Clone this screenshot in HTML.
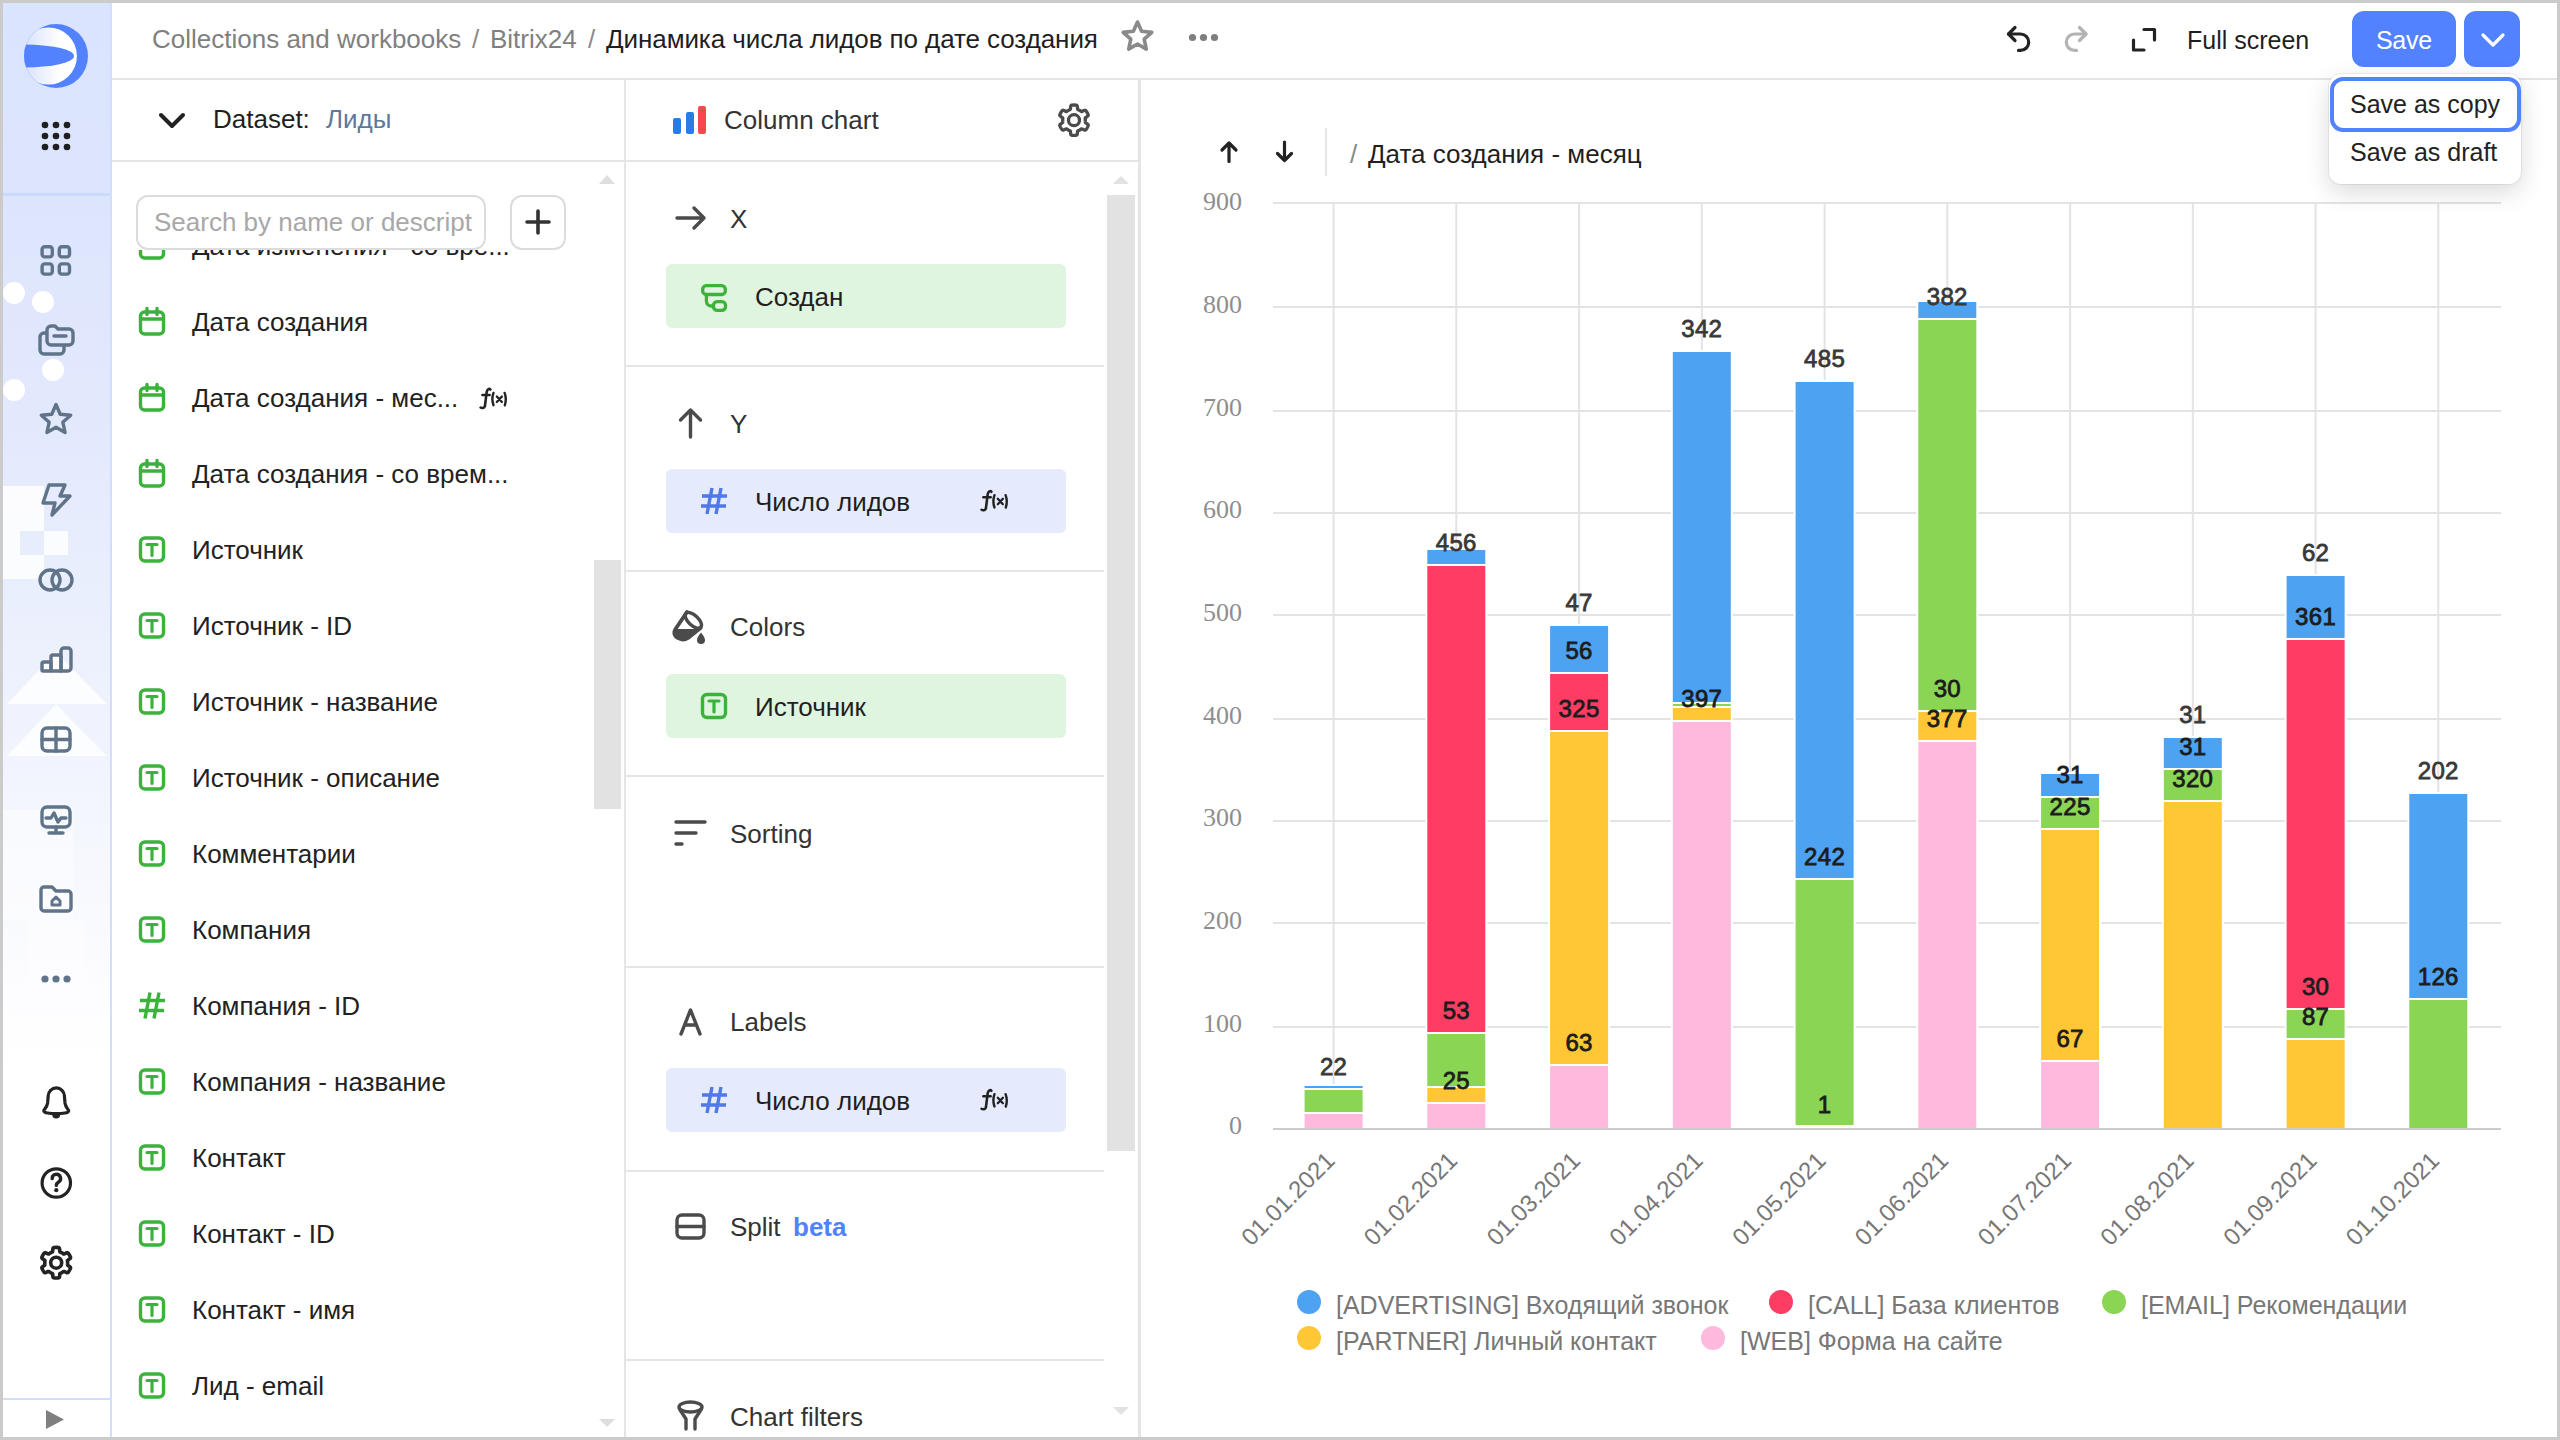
<!DOCTYPE html>
<html><head><meta charset="utf-8">
<style>
*{box-sizing:border-box}
html,body{margin:0;padding:0}
body{width:2560px;height:1440px;position:relative;overflow:hidden;background:#fff;font-family:"Liberation Sans",sans-serif;color:#222}
.a{position:absolute}
.t{position:absolute;white-space:nowrap;font-size:26px;line-height:26px}
.bd{position:absolute;background:#e5e5e5}
#ov{position:absolute;left:0;top:0;width:2560px;height:1440px;overflow:visible;z-index:5}
</style></head><body>

<div class="a" style="left:0;top:0;width:111px;height:1440px;background:linear-gradient(180deg,#dbe4fe 0px,#dde5fd 200px,#e3e9fd 420px,#eaeffd 600px,#f2f5fe 780px,#f9fafe 920px,#fdfdff 1000px,#fff 1060px)"></div>
<svg class="a" style="left:0;top:0;z-index:1" width="111" height="1440"><g fill="#fff"><circle cx="14" cy="293" r="11"/><circle cx="43" cy="302" r="11"/><circle cx="53" cy="370" r="11"/><circle cx="14" cy="390" r="11"/></g><g fill="#fff" opacity="0.85"><path d="M3 486H44V579H3Z M20 531V555H44V531Z" fill-rule="evenodd"/><rect x="44" y="531" width="24" height="24"/><path d="M7 704 L56 652 L107 704 Z"/><path d="M7 756 L56 704 L107 756 Z" opacity="0.95"/></g><g fill="#fff" opacity="0.45"><rect x="3" y="810" width="70" height="110"/><rect x="28" y="920" width="57" height="80"/></g></svg>
<div class="bd" style="left:110px;top:0;width:2px;height:1440px;background:#d4ddfb;z-index:2"></div>
<div class="bd" style="left:0;top:193px;width:110px;height:3px;background:#cbd9fb;z-index:2"></div>
<div class="bd" style="left:0;top:1398px;width:110px;height:2px;background:#d4ddfb;z-index:2"></div>
<div class="bd" style="left:112px;top:78px;width:2448px;height:2px"></div>
<div class="t" style="left:152px;top:26px;color:#7f7f7f">Collections and workbooks</div>
<div class="t" style="left:472px;top:26px;color:#8a8a8a">/</div>
<div class="t" style="left:490px;top:26px;color:#7f7f7f">Bitrix24</div>
<div class="t" style="left:588px;top:26px;color:#8a8a8a">/</div>
<div class="t" style="left:606px;top:26px;color:#1f1f1f;letter-spacing:-0.08px">Динамика числа лидов по дате создания</div>
<div class="t" style="left:2187px;top:27px;font-size:25px;color:#1f1f1f">Full screen</div>
<div class="a" style="left:2352px;top:11px;width:104px;height:56px;border-radius:12px;background:#5282ff"></div>
<div class="t" style="left:2376px;top:27px;color:#fff;font-size:25px;letter-spacing:-0.3px">Save</div>
<div class="a" style="left:2464px;top:11px;width:56px;height:56px;border-radius:12px;background:#5282ff"></div>
<div class="a" style="left:2329px;top:74px;width:192px;height:110px;border-radius:12px;background:#fff;box-shadow:0 8px 24px rgba(0,0,0,0.15),0 0 0 1px rgba(0,0,0,0.06);z-index:8"></div>
<div class="a" style="left:2330px;top:77px;width:191px;height:55px;border-radius:13px;border:4px solid #5282ff;z-index:9"></div>
<div class="t" style="left:2350px;top:91px;font-size:25px;color:#222;z-index:9">Save as copy</div>
<div class="t" style="left:2350px;top:139px;font-size:25px;color:#222;z-index:9">Save as draft</div>
<div class="bd" style="left:112px;top:160px;width:513px;height:2px;z-index:3"></div>
<div class="bd" style="left:624px;top:80px;width:2px;height:1360px"></div>
<div class="a" style="left:112px;top:80px;width:512px;height:80px;background:#fff;z-index:2"></div>
<div class="t" style="left:213px;top:106px;color:#1f1f1f;z-index:3">Dataset:</div>
<div class="t" style="left:326px;top:106px;color:#5b7a9b;z-index:3">Лиды</div>
<div class="t" style="left:192px;top:233px;color:#222">Дата изменения - со вре...</div>
<div class="t" style="left:192px;top:309px;color:#222">Дата создания</div>
<div class="t" style="left:192px;top:385px;color:#222">Дата создания - мес...</div>
<div class="t" style="left:192px;top:461px;color:#222">Дата создания - со врем...</div>
<div class="t" style="left:192px;top:537px;color:#222">Источник</div>
<div class="t" style="left:192px;top:613px;color:#222">Источник - ID</div>
<div class="t" style="left:192px;top:689px;color:#222">Источник - название</div>
<div class="t" style="left:192px;top:765px;color:#222">Источник - описание</div>
<div class="t" style="left:192px;top:841px;color:#222">Комментарии</div>
<div class="t" style="left:192px;top:917px;color:#222">Компания</div>
<div class="t" style="left:192px;top:993px;color:#222">Компания - ID</div>
<div class="t" style="left:192px;top:1069px;color:#222">Компания - название</div>
<div class="t" style="left:192px;top:1145px;color:#222">Контакт</div>
<div class="t" style="left:192px;top:1221px;color:#222">Контакт - ID</div>
<div class="t" style="left:192px;top:1297px;color:#222">Контакт - имя</div>
<div class="t" style="left:192px;top:1373px;color:#222">Лид - email</div>
<div class="a" style="left:112px;top:162px;width:480px;height:88px;background:#fff;z-index:6"></div>
<div class="a" style="left:136px;top:195px;width:350px;height:55px;border-radius:12px;border:2px solid #dcdcdc;background:#fff;z-index:7"></div>
<div class="t" style="left:154px;top:209px;color:#a8a8a8;z-index:7">Search by name or descript</div>
<div class="a" style="left:510px;top:195px;width:56px;height:55px;border-radius:12px;border:2px solid #dcdcdc;background:#fff;z-index:7"></div>
<svg class="a" style="left:510px;top:195px;z-index:8" width="56" height="55"><g stroke="#333" stroke-width="3.6" stroke-linecap="round"><path d="M28 16V38M17 27H39"/></g></svg>
<div class="a" style="left:594px;top:560px;width:27px;height:249px;background:#e2e2e2"></div>
<div class="bd" style="left:626px;top:160px;width:512px;height:2px"></div>
<div class="bd" style="left:1138px;top:80px;width:3px;height:1360px"></div>
<div class="t" style="left:724px;top:107px;color:#333">Column chart</div>
<div class="a" style="left:1107px;top:195px;width:28px;height:956px;background:#e2e2e2"></div>
<div class="bd" style="left:626px;top:365px;width:478px;height:2px"></div>
<div class="bd" style="left:626px;top:570px;width:478px;height:2px"></div>
<div class="bd" style="left:626px;top:775px;width:478px;height:2px"></div>
<div class="bd" style="left:626px;top:966px;width:478px;height:2px"></div>
<div class="bd" style="left:626px;top:1170px;width:478px;height:2px"></div>
<div class="bd" style="left:626px;top:1359px;width:478px;height:2px"></div>
<div class="t" style="left:730px;top:205.5px;color:#333">X</div>
<div class="t" style="left:730px;top:410.5px;color:#333">Y</div>
<div class="t" style="left:730px;top:614px;color:#333">Colors</div>
<div class="t" style="left:730px;top:820.5px;color:#333">Sorting</div>
<div class="t" style="left:730px;top:1009px;color:#333">Labels</div>
<div class="t" style="left:730px;top:1214px;color:#333">Split</div>
<div class="t" style="left:730px;top:1404px;color:#333">Chart filters</div>
<div class="t" style="left:793px;top:1214px;color:#5282ff;font-weight:bold">beta</div>
<div class="a" style="left:666px;top:264px;width:400px;height:64px;border-radius:6px;background:#e0f5e0"></div>
<div class="t" style="left:755px;top:284px;color:#1f1f1f">Создан</div>
<div class="a" style="left:666px;top:469px;width:400px;height:64px;border-radius:6px;background:#e5ebfd"></div>
<div class="t" style="left:755px;top:489px;color:#1f1f1f">Число лидов</div>
<div class="a" style="left:666px;top:674px;width:400px;height:64px;border-radius:6px;background:#e0f5e0"></div>
<div class="t" style="left:755px;top:694px;color:#1f1f1f">Источник</div>
<div class="a" style="left:666px;top:1068px;width:400px;height:64px;border-radius:6px;background:#e5ebfd"></div>
<div class="t" style="left:755px;top:1088px;color:#1f1f1f">Число лидов</div>
<div class="bd" style="left:1325px;top:128px;width:2px;height:48px"></div>
<div class="t" style="left:1350px;top:141px;color:#888">/</div>
<div class="t" style="left:1368px;top:141px;color:#1f1f1f">Дата создания - месяц</div>
<svg class="a" style="left:0;top:0;z-index:1" width="2560" height="1440">
<g transform="translate(152,245.5)" fill="none" stroke="#3bb33b" stroke-width="3.4" stroke-linecap="round"><rect x="-11.5" y="-9.5" width="23" height="22" rx="4"/><path d="M-11.5 -2.5H11.5M-5 -13V-7M5 -13V-7"/></g>
<g transform="translate(152,321.5)" fill="none" stroke="#3bb33b" stroke-width="3.4" stroke-linecap="round"><rect x="-11.5" y="-9.5" width="23" height="22" rx="4"/><path d="M-11.5 -2.5H11.5M-5 -13V-7M5 -13V-7"/></g>
<g transform="translate(152,397.5)" fill="none" stroke="#3bb33b" stroke-width="3.4" stroke-linecap="round"><rect x="-11.5" y="-9.5" width="23" height="22" rx="4"/><path d="M-11.5 -2.5H11.5M-5 -13V-7M5 -13V-7"/></g>
<g fill="none" stroke="#222" stroke-linecap="round"><path d="M480.60 407.50 C481.80 408.35 484.00 408.35 484.90 406.25 L486.70 391.95 C487.20 388.95 489.40 388.25 490.40 389.55" stroke-width="2.6"/><path d="M482.40 395.00 H489.60" stroke-width="2.6"/><path d="M493.50 392.95 Q491.20 399.10 493.50 405.25 M504.60 392.95 Q506.90 399.10 504.80 405.25" stroke-width="2.4"/><path d="M496.80 396.55 L501.90 401.95 M501.90 396.55 L496.80 401.95" stroke-width="2.3"/></g>
<g transform="translate(152,473.5)" fill="none" stroke="#3bb33b" stroke-width="3.4" stroke-linecap="round"><rect x="-11.5" y="-9.5" width="23" height="22" rx="4"/><path d="M-11.5 -2.5H11.5M-5 -13V-7M5 -13V-7"/></g>
<g transform="translate(152,549.5)" fill="none" stroke="#3bb33b" stroke-width="3.4" stroke-linecap="round"><rect x="-11.5" y="-11.5" width="23" height="23" rx="4.5"/><path d="M-5 -5H5M0 -5V6" stroke-width="3.2"/></g>
<g transform="translate(152,625.5)" fill="none" stroke="#3bb33b" stroke-width="3.4" stroke-linecap="round"><rect x="-11.5" y="-11.5" width="23" height="23" rx="4.5"/><path d="M-5 -5H5M0 -5V6" stroke-width="3.2"/></g>
<g transform="translate(152,701.5)" fill="none" stroke="#3bb33b" stroke-width="3.4" stroke-linecap="round"><rect x="-11.5" y="-11.5" width="23" height="23" rx="4.5"/><path d="M-5 -5H5M0 -5V6" stroke-width="3.2"/></g>
<g transform="translate(152,777.5)" fill="none" stroke="#3bb33b" stroke-width="3.4" stroke-linecap="round"><rect x="-11.5" y="-11.5" width="23" height="23" rx="4.5"/><path d="M-5 -5H5M0 -5V6" stroke-width="3.2"/></g>
<g transform="translate(152,853.5)" fill="none" stroke="#3bb33b" stroke-width="3.4" stroke-linecap="round"><rect x="-11.5" y="-11.5" width="23" height="23" rx="4.5"/><path d="M-5 -5H5M0 -5V6" stroke-width="3.2"/></g>
<g transform="translate(152,929.5)" fill="none" stroke="#3bb33b" stroke-width="3.4" stroke-linecap="round"><rect x="-11.5" y="-11.5" width="23" height="23" rx="4.5"/><path d="M-5 -5H5M0 -5V6" stroke-width="3.2"/></g>
<g transform="translate(152,1005.5)" fill="none" stroke="#3bb33b" stroke-width="3.4" stroke-linecap="butt"><path d="M-2 -13L-7 13M7 -13L2 13M-12 -5H13M-13 5H12"/></g>
<g transform="translate(152,1081.5)" fill="none" stroke="#3bb33b" stroke-width="3.4" stroke-linecap="round"><rect x="-11.5" y="-11.5" width="23" height="23" rx="4.5"/><path d="M-5 -5H5M0 -5V6" stroke-width="3.2"/></g>
<g transform="translate(152,1157.5)" fill="none" stroke="#3bb33b" stroke-width="3.4" stroke-linecap="round"><rect x="-11.5" y="-11.5" width="23" height="23" rx="4.5"/><path d="M-5 -5H5M0 -5V6" stroke-width="3.2"/></g>
<g transform="translate(152,1233.5)" fill="none" stroke="#3bb33b" stroke-width="3.4" stroke-linecap="round"><rect x="-11.5" y="-11.5" width="23" height="23" rx="4.5"/><path d="M-5 -5H5M0 -5V6" stroke-width="3.2"/></g>
<g transform="translate(152,1309.5)" fill="none" stroke="#3bb33b" stroke-width="3.4" stroke-linecap="round"><rect x="-11.5" y="-11.5" width="23" height="23" rx="4.5"/><path d="M-5 -5H5M0 -5V6" stroke-width="3.2"/></g>
<g transform="translate(152,1385.5)" fill="none" stroke="#3bb33b" stroke-width="3.4" stroke-linecap="round"><rect x="-11.5" y="-11.5" width="23" height="23" rx="4.5"/><path d="M-5 -5H5M0 -5V6" stroke-width="3.2"/></g>
<g transform="translate(714,296)" fill="none" stroke="#3bb33b" stroke-width="3.3" stroke-linecap="round" stroke-linejoin="round"><rect x="-11.3" y="-10.3" width="22.6" height="8.8" rx="3.6"/><rect x="-0.5" y="5.6" width="12" height="8.8" rx="3.6"/><path d="M-7.6 -1.5V5A5 5 0 0 0 -2.6 10H-0.5"/></g>
<g transform="translate(714,501)" fill="none" stroke="#4f78e8" stroke-width="3.4"><path d="M-2 -13L-7 13M7 -13L2 13M-12 -5H13M-13 5H12"/></g>
<g fill="none" stroke="#222" stroke-linecap="round"><path d="M981.60 509.75 C982.80 510.60 985.00 510.60 985.90 508.50 L987.70 494.20 C988.20 491.20 990.40 490.50 991.40 491.80" stroke-width="2.6"/><path d="M983.40 497.25 H990.60" stroke-width="2.6"/><path d="M994.50 495.20 Q992.20 501.35 994.50 507.50 M1005.60 495.20 Q1007.90 501.35 1005.80 507.50" stroke-width="2.4"/><path d="M997.80 498.80 L1002.90 504.20 M1002.90 498.80 L997.80 504.20" stroke-width="2.3"/></g>
<g transform="translate(714,706)" fill="none" stroke="#3bb33b" stroke-width="3.4" stroke-linecap="round"><rect x="-11.5" y="-11.5" width="23" height="23" rx="4.5"/><path d="M-5 -5H5M0 -5V6" stroke-width="3.2"/></g>
<g transform="translate(714,1100)" fill="none" stroke="#4f78e8" stroke-width="3.4"><path d="M-2 -13L-7 13M7 -13L2 13M-12 -5H13M-13 5H12"/></g>
<g fill="none" stroke="#222" stroke-linecap="round"><path d="M981.60 1108.75 C982.80 1109.60 985.00 1109.60 985.90 1107.50 L987.70 1093.20 C988.20 1090.20 990.40 1089.50 991.40 1090.80" stroke-width="2.6"/><path d="M983.40 1096.25 H990.60" stroke-width="2.6"/><path d="M994.50 1094.20 Q992.20 1100.35 994.50 1106.50 M1005.60 1094.20 Q1007.90 1100.35 1005.80 1106.50" stroke-width="2.4"/><path d="M997.80 1097.80 L1002.90 1103.20 M1002.90 1097.80 L997.80 1103.20" stroke-width="2.3"/></g>
</svg>
<svg id="ov" width="2560" height="1440">
<rect x="1273" y="1026" width="1228" height="2" fill="#e3e3e3"/>
<rect x="1273" y="922" width="1228" height="2" fill="#e3e3e3"/>
<rect x="1273" y="820" width="1228" height="2" fill="#e3e3e3"/>
<rect x="1273" y="718" width="1228" height="2" fill="#e3e3e3"/>
<rect x="1273" y="614" width="1228" height="2" fill="#e3e3e3"/>
<rect x="1273" y="512" width="1228" height="2" fill="#e3e3e3"/>
<rect x="1273" y="410" width="1228" height="2" fill="#e3e3e3"/>
<rect x="1273" y="306" width="1228" height="2" fill="#e3e3e3"/>
<rect x="1273" y="202" width="1228" height="2" fill="#e3e3e3"/>
<text x="1242" y="1134.3" text-anchor="end" font-family="Liberation Serif" font-size="26" fill="#8e8e8e">0</text>
<text x="1242" y="1031.6" text-anchor="end" font-family="Liberation Serif" font-size="26" fill="#8e8e8e">100</text>
<text x="1242" y="929.0" text-anchor="end" font-family="Liberation Serif" font-size="26" fill="#8e8e8e">200</text>
<text x="1242" y="826.3" text-anchor="end" font-family="Liberation Serif" font-size="26" fill="#8e8e8e">300</text>
<text x="1242" y="723.6" text-anchor="end" font-family="Liberation Serif" font-size="26" fill="#8e8e8e">400</text>
<text x="1242" y="621.0" text-anchor="end" font-family="Liberation Serif" font-size="26" fill="#8e8e8e">500</text>
<text x="1242" y="518.3" text-anchor="end" font-family="Liberation Serif" font-size="26" fill="#8e8e8e">600</text>
<text x="1242" y="415.6" text-anchor="end" font-family="Liberation Serif" font-size="26" fill="#8e8e8e">700</text>
<text x="1242" y="313.0" text-anchor="end" font-family="Liberation Serif" font-size="26" fill="#8e8e8e">800</text>
<text x="1242" y="210.3" text-anchor="end" font-family="Liberation Serif" font-size="26" fill="#8e8e8e">900</text>
<rect x="1332.6" y="202" width="2" height="927" fill="#e3e3e3"/>
<rect x="1455.3" y="202" width="2" height="927" fill="#e3e3e3"/>
<rect x="1578.1" y="202" width="2" height="927" fill="#e3e3e3"/>
<rect x="1700.8" y="202" width="2" height="927" fill="#e3e3e3"/>
<rect x="1823.6" y="202" width="2" height="927" fill="#e3e3e3"/>
<rect x="1946.3" y="202" width="2" height="927" fill="#e3e3e3"/>
<rect x="2069.1" y="202" width="2" height="927" fill="#e3e3e3"/>
<rect x="2191.8" y="202" width="2" height="927" fill="#e3e3e3"/>
<rect x="2314.6" y="202" width="2" height="927" fill="#e3e3e3"/>
<rect x="2437.3" y="202" width="2" height="927" fill="#e3e3e3"/>
<rect x="1273" y="1128" width="1228" height="2" fill="#cccccc"/>
<rect x="1302.6" y="1084" width="62" height="44" fill="#fff"/>
<rect x="1304.6" y="1086" width="58" height="2" fill="#4da2f1"/>
<rect x="1304.6" y="1090" width="58" height="22" fill="#8ad554"/>
<rect x="1304.6" y="1114" width="58" height="14" fill="#ffb9dd"/>
<rect x="1425.3" y="548" width="62" height="580" fill="#fff"/>
<rect x="1427.3" y="550" width="58" height="14" fill="#4da2f1"/>
<rect x="1427.3" y="566" width="58" height="466" fill="#ff3d64"/>
<rect x="1427.3" y="1034" width="58" height="52" fill="#8ad554"/>
<rect x="1427.3" y="1088" width="58" height="14" fill="#ffc636"/>
<rect x="1427.3" y="1104" width="58" height="24" fill="#ffb9dd"/>
<rect x="1548.1" y="624" width="62" height="504" fill="#fff"/>
<rect x="1550.1" y="626" width="58" height="46" fill="#4da2f1"/>
<rect x="1550.1" y="674" width="58" height="56" fill="#ff3d64"/>
<rect x="1550.1" y="732" width="58" height="332" fill="#ffc636"/>
<rect x="1550.1" y="1066" width="58" height="62" fill="#ffb9dd"/>
<rect x="1670.8" y="350" width="62" height="778" fill="#fff"/>
<rect x="1672.8" y="352" width="58" height="350" fill="#4da2f1"/>
<rect x="1672.8" y="704" width="58" height="2" fill="#8ad554"/>
<rect x="1672.8" y="708" width="58" height="12" fill="#ffc636"/>
<rect x="1672.8" y="722" width="58" height="406" fill="#ffb9dd"/>
<rect x="1793.6" y="380" width="62" height="748" fill="#fff"/>
<rect x="1795.6" y="382" width="58" height="496" fill="#4da2f1"/>
<rect x="1795.6" y="880" width="58" height="245" fill="#8ad554"/>
<rect x="1916.3" y="300" width="62" height="828" fill="#fff"/>
<rect x="1918.3" y="302" width="58" height="16" fill="#4da2f1"/>
<rect x="1918.3" y="320" width="58" height="390" fill="#8ad554"/>
<rect x="1918.3" y="712" width="58" height="28" fill="#ffc636"/>
<rect x="1918.3" y="742" width="58" height="386" fill="#ffb9dd"/>
<rect x="2039.1" y="772" width="62" height="356" fill="#fff"/>
<rect x="2041.1" y="774" width="58" height="22" fill="#4da2f1"/>
<rect x="2041.1" y="798" width="58" height="30" fill="#8ad554"/>
<rect x="2041.1" y="830" width="58" height="230" fill="#ffc636"/>
<rect x="2041.1" y="1062" width="58" height="66" fill="#ffb9dd"/>
<rect x="2161.8" y="736" width="62" height="392" fill="#fff"/>
<rect x="2163.8" y="738" width="58" height="30" fill="#4da2f1"/>
<rect x="2163.8" y="770" width="58" height="30" fill="#8ad554"/>
<rect x="2163.8" y="802" width="58" height="326" fill="#ffc636"/>
<rect x="2284.6" y="574" width="62" height="554" fill="#fff"/>
<rect x="2286.6" y="576" width="58" height="62" fill="#4da2f1"/>
<rect x="2286.6" y="640" width="58" height="368" fill="#ff3d64"/>
<rect x="2286.6" y="1010" width="58" height="28" fill="#8ad554"/>
<rect x="2286.6" y="1040" width="58" height="88" fill="#ffc636"/>
<rect x="2407.3" y="792" width="62" height="336" fill="#fff"/>
<rect x="2409.3" y="794" width="58" height="204" fill="#4da2f1"/>
<rect x="2409.3" y="1000" width="58" height="128" fill="#8ad554"/>
<text x="1333.6" y="1074.5" text-anchor="middle" font-family="Liberation Sans" font-size="24" fill="#383838" stroke="#383838" stroke-width="0.8" letter-spacing="0.3">22</text>
<text x="1456.3" y="550.5" text-anchor="middle" font-family="Liberation Sans" font-size="24" fill="#383838" stroke="#383838" stroke-width="0.8" letter-spacing="0.3">456</text>
<text x="1456.3" y="1018.5" text-anchor="middle" font-family="Liberation Sans" font-size="24" fill="#1c1c1c" stroke="#1c1c1c" stroke-width="0.8" letter-spacing="0.3">53</text>
<text x="1456.3" y="1088.5" text-anchor="middle" font-family="Liberation Sans" font-size="24" fill="#1c1c1c" stroke="#1c1c1c" stroke-width="0.8" letter-spacing="0.3">25</text>
<text x="1579.1" y="610.5" text-anchor="middle" font-family="Liberation Sans" font-size="24" fill="#383838" stroke="#383838" stroke-width="0.8" letter-spacing="0.3">47</text>
<text x="1579.1" y="658.5" text-anchor="middle" font-family="Liberation Sans" font-size="24" fill="#1c1c1c" stroke="#1c1c1c" stroke-width="0.8" letter-spacing="0.3">56</text>
<text x="1579.1" y="716.5" text-anchor="middle" font-family="Liberation Sans" font-size="24" fill="#1c1c1c" stroke="#1c1c1c" stroke-width="0.8" letter-spacing="0.3">325</text>
<text x="1579.1" y="1050.5" text-anchor="middle" font-family="Liberation Sans" font-size="24" fill="#1c1c1c" stroke="#1c1c1c" stroke-width="0.8" letter-spacing="0.3">63</text>
<text x="1701.8" y="336.5" text-anchor="middle" font-family="Liberation Sans" font-size="24" fill="#383838" stroke="#383838" stroke-width="0.8" letter-spacing="0.3">342</text>
<text x="1701.8" y="706.5" text-anchor="middle" font-family="Liberation Sans" font-size="24" fill="#1c1c1c" stroke="#1c1c1c" stroke-width="0.8" letter-spacing="0.3">397</text>
<text x="1824.6" y="366.5" text-anchor="middle" font-family="Liberation Sans" font-size="24" fill="#383838" stroke="#383838" stroke-width="0.8" letter-spacing="0.3">485</text>
<text x="1824.6" y="864.5" text-anchor="middle" font-family="Liberation Sans" font-size="24" fill="#1c1c1c" stroke="#1c1c1c" stroke-width="0.8" letter-spacing="0.3">242</text>
<text x="1824.6" y="1112.5" text-anchor="middle" font-family="Liberation Sans" font-size="24" fill="#1c1c1c" stroke="#1c1c1c" stroke-width="0.8" letter-spacing="0.3">1</text>
<text x="1947.3" y="304.5" text-anchor="middle" font-family="Liberation Sans" font-size="24" fill="#383838" stroke="#383838" stroke-width="0.8" letter-spacing="0.3">382</text>
<text x="1947.3" y="696.5" text-anchor="middle" font-family="Liberation Sans" font-size="24" fill="#1c1c1c" stroke="#1c1c1c" stroke-width="0.8" letter-spacing="0.3">30</text>
<text x="1947.3" y="726.5" text-anchor="middle" font-family="Liberation Sans" font-size="24" fill="#1c1c1c" stroke="#1c1c1c" stroke-width="0.8" letter-spacing="0.3">377</text>
<text x="2070.1" y="782.5" text-anchor="middle" font-family="Liberation Sans" font-size="24" fill="#1c1c1c" stroke="#1c1c1c" stroke-width="0.8" letter-spacing="0.3">31</text>
<text x="2070.1" y="814.5" text-anchor="middle" font-family="Liberation Sans" font-size="24" fill="#1c1c1c" stroke="#1c1c1c" stroke-width="0.8" letter-spacing="0.3">225</text>
<text x="2070.1" y="1046.5" text-anchor="middle" font-family="Liberation Sans" font-size="24" fill="#1c1c1c" stroke="#1c1c1c" stroke-width="0.8" letter-spacing="0.3">67</text>
<text x="2192.8" y="722.5" text-anchor="middle" font-family="Liberation Sans" font-size="24" fill="#383838" stroke="#383838" stroke-width="0.8" letter-spacing="0.3">31</text>
<text x="2192.8" y="754.5" text-anchor="middle" font-family="Liberation Sans" font-size="24" fill="#1c1c1c" stroke="#1c1c1c" stroke-width="0.8" letter-spacing="0.3">31</text>
<text x="2192.8" y="786.5" text-anchor="middle" font-family="Liberation Sans" font-size="24" fill="#1c1c1c" stroke="#1c1c1c" stroke-width="0.8" letter-spacing="0.3">320</text>
<text x="2315.6" y="560.5" text-anchor="middle" font-family="Liberation Sans" font-size="24" fill="#383838" stroke="#383838" stroke-width="0.8" letter-spacing="0.3">62</text>
<text x="2315.6" y="624.5" text-anchor="middle" font-family="Liberation Sans" font-size="24" fill="#1c1c1c" stroke="#1c1c1c" stroke-width="0.8" letter-spacing="0.3">361</text>
<text x="2315.6" y="994.5" text-anchor="middle" font-family="Liberation Sans" font-size="24" fill="#1c1c1c" stroke="#1c1c1c" stroke-width="0.8" letter-spacing="0.3">30</text>
<text x="2315.6" y="1024.5" text-anchor="middle" font-family="Liberation Sans" font-size="24" fill="#1c1c1c" stroke="#1c1c1c" stroke-width="0.8" letter-spacing="0.3">87</text>
<text x="2438.3" y="778.5" text-anchor="middle" font-family="Liberation Sans" font-size="24" fill="#383838" stroke="#383838" stroke-width="0.8" letter-spacing="0.3">202</text>
<text x="2438.3" y="984.5" text-anchor="middle" font-family="Liberation Sans" font-size="24" fill="#1c1c1c" stroke="#1c1c1c" stroke-width="0.8" letter-spacing="0.3">126</text>
<text transform="translate(1336.1,1162) rotate(-45)" text-anchor="end" font-family="Liberation Sans" font-size="24" fill="#777">01.01.2021</text>
<text transform="translate(1458.8,1162) rotate(-45)" text-anchor="end" font-family="Liberation Sans" font-size="24" fill="#777">01.02.2021</text>
<text transform="translate(1581.6,1162) rotate(-45)" text-anchor="end" font-family="Liberation Sans" font-size="24" fill="#777">01.03.2021</text>
<text transform="translate(1704.3,1162) rotate(-45)" text-anchor="end" font-family="Liberation Sans" font-size="24" fill="#777">01.04.2021</text>
<text transform="translate(1827.1,1162) rotate(-45)" text-anchor="end" font-family="Liberation Sans" font-size="24" fill="#777">01.05.2021</text>
<text transform="translate(1949.8,1162) rotate(-45)" text-anchor="end" font-family="Liberation Sans" font-size="24" fill="#777">01.06.2021</text>
<text transform="translate(2072.6,1162) rotate(-45)" text-anchor="end" font-family="Liberation Sans" font-size="24" fill="#777">01.07.2021</text>
<text transform="translate(2195.3,1162) rotate(-45)" text-anchor="end" font-family="Liberation Sans" font-size="24" fill="#777">01.08.2021</text>
<text transform="translate(2318.1,1162) rotate(-45)" text-anchor="end" font-family="Liberation Sans" font-size="24" fill="#777">01.09.2021</text>
<text transform="translate(2440.8,1162) rotate(-45)" text-anchor="end" font-family="Liberation Sans" font-size="24" fill="#777">01.10.2021</text>
<circle cx="1309" cy="1302" r="12" fill="#4da2f1"/>
<text x="1336" y="1313.5" font-family="Liberation Sans" font-size="25" fill="#777">[ADVERTISING] Входящий звонок</text>
<circle cx="1781" cy="1302" r="12" fill="#ff3d64"/>
<text x="1808" y="1313.5" font-family="Liberation Sans" font-size="25" fill="#777">[CALL] База клиентов</text>
<circle cx="2114" cy="1302" r="12" fill="#8ad554"/>
<text x="2141" y="1313.5" font-family="Liberation Sans" font-size="25" fill="#777">[EMAIL] Рекомендации</text>
<circle cx="1309" cy="1338" r="12" fill="#ffc636"/>
<text x="1336" y="1349.5" font-family="Liberation Sans" font-size="25" fill="#777">[PARTNER] Личный контакт</text>
<circle cx="1713" cy="1338" r="12" fill="#ffb9dd"/>
<text x="1740" y="1349.5" font-family="Liberation Sans" font-size="25" fill="#777">[WEB] Форма на сайте</text>
<defs><linearGradient id="lg" x1="0.2" y1="0.1" x2="0.6" y2="1"><stop offset="0" stop-color="#ffffff"/><stop offset="0.55" stop-color="#ffffff"/><stop offset="1" stop-color="#d2dcf6"/></linearGradient><linearGradient id="lg2" gradientUnits="userSpaceOnUse" x1="22" y1="0" x2="60" y2="0"><stop offset="0" stop-color="#d6e0fc"/><stop offset="1" stop-color="#ffffff"/></linearGradient><clipPath id="lc"><circle cx="56" cy="56" r="32"/></clipPath></defs>
<circle cx="56" cy="56" r="32" fill="#5282ff"/><g clip-path="url(#lc)"><circle cx="48.3" cy="56" r="28.6" fill="url(#lg2)"/><ellipse cx="24" cy="56" rx="50" ry="11.5" fill="#5282ff"/></g>
<circle cx="45" cy="125" r="3.3" fill="#1f1f1f"/>
<circle cx="56" cy="125" r="3.3" fill="#1f1f1f"/>
<circle cx="67" cy="125" r="3.3" fill="#1f1f1f"/>
<circle cx="45" cy="136" r="3.3" fill="#1f1f1f"/>
<circle cx="56" cy="136" r="3.3" fill="#1f1f1f"/>
<circle cx="67" cy="136" r="3.3" fill="#1f1f1f"/>
<circle cx="45" cy="147" r="3.3" fill="#1f1f1f"/>
<circle cx="56" cy="147" r="3.3" fill="#1f1f1f"/>
<circle cx="67" cy="147" r="3.3" fill="#1f1f1f"/>
<g fill="none" stroke-width="3.4" stroke-linecap="round" stroke-linejoin="round" stroke="#5f7489"><rect x="42.1" y="246.7" width="10.2" height="10.2" rx="2.6"/><rect x="59.3" y="246.7" width="10.2" height="10.2" rx="2.6"/><rect x="42.1" y="263.9" width="10.2" height="10.2" rx="2.6"/><rect x="59.3" y="263.9" width="10.2" height="10.2" rx="2.6"/></g>
<g fill="none" stroke-width="3.4" stroke-linecap="round" stroke-linejoin="round" stroke="#5f7489"><path d="M46 333H44A4 4 0 0 0 40 337V350A4 4 0 0 0 44 354H60A4 4 0 0 0 64 350V346"/><path d="M47 341V330A4 4 0 0 1 51 326H55L58 329H69A4 4 0 0 1 73 333V341A4 4 0 0 1 69 345H51A4 4 0 0 1 47 341Z"/><path d="M54 336H66"/></g>
<path d="M56.0 404.5 L60.2 414.2 L70.7 415.2 L62.8 422.2 L65.1 432.5 L56.0 427.2 L46.9 432.5 L49.2 422.2 L41.3 415.2 L51.8 414.2Z" fill="none" stroke-width="3.4" stroke-linecap="round" stroke-linejoin="round" stroke="#5f7489"/>
<path d="M49 485H65L60 496H70L52 515L55 503H43Z" fill="none" stroke-width="3.4" stroke-linecap="round" stroke-linejoin="round" stroke="#5f7489"/>
<g fill="none" stroke-width="3.4" stroke-linecap="round" stroke-linejoin="round" stroke="#5f7489"><circle cx="50" cy="580" r="10"/><circle cx="62" cy="580" r="10"/></g>
<g fill="none" stroke-width="3.4" stroke-linecap="round" stroke-linejoin="round" stroke="#5f7489"><path d="M42 670V664A2 2 0 0 1 44 662H51V670A1 1 0 0 1 50 671H43A1 1 0 0 1 42 670Z"/><path d="M51 671V657A2 2 0 0 1 53 655H59A2 2 0 0 1 61 657V671Z"/><path d="M61 671V651A3 3 0 0 1 64 648H68A3 3 0 0 1 71 651V668A3 3 0 0 1 68 671Z"/></g>
<g fill="none" stroke-width="3.4" stroke-linecap="round" stroke-linejoin="round" stroke="#5f7489"><rect x="42" y="728" width="28" height="23" rx="5"/><path d="M56 728V751M42 739.5H70"/></g>
<g fill="none" stroke-width="3.4" stroke-linecap="round" stroke-linejoin="round" stroke="#5f7489"><rect x="42" y="807" width="28" height="20" rx="5"/><path d="M46 818H51L54 813L58 822L61 818H66M56 827V833M49 833H63"/></g>
<g fill="none" stroke-width="3.4" stroke-linecap="round" stroke-linejoin="round" stroke="#5f7489"><path d="M41 890A3 3 0 0 1 44 887H52L56 891H68A3 3 0 0 1 71 894V908A3 3 0 0 1 68 911H44A3 3 0 0 1 41 908Z"/><path d="M52 905V901L56 897L60 901V905Z" stroke-width="3"/></g>
<circle cx="45" cy="979" r="3.6" fill="#5f7489"/>
<circle cx="56" cy="979" r="3.6" fill="#5f7489"/>
<circle cx="67" cy="979" r="3.6" fill="#5f7489"/>
<g fill="none" stroke-width="3.2" stroke-linejoin="round" stroke="#232323"><path d="M43.8 1110.5C44.5 1108.8 47 1107.5 47.6 1103L48.2 1096A8.1 8.1 0 0 1 64.4 1096L65 1103C65.6 1107.5 68 1108.8 68.7 1110.5C69.2 1113 62 1113.6 56.2 1113.6C50.4 1113.6 43.3 1113 43.8 1110.5Z"/></g><path d="M52.2 1114.5A4 4 0 0 0 60.2 1114.5Z" fill="#232323"/>
<g fill="none" stroke-width="3.2" stroke-linecap="round" stroke-linejoin="round" stroke="#232323"><circle cx="56.3" cy="1183" r="14.2"/><path d="M52.2 1178.6A4.2 4.2 0 1 1 58.6 1182C57.2 1183 56.3 1183.8 56.3 1185.4" stroke-width="3.4"/></g><circle cx="56.3" cy="1190.2" r="2.1" fill="#232323"/>
<g fill="none" stroke="#232323" stroke-width="3.6" stroke-linejoin="round"><path d="M56.20 1247.40 L56.87 1247.41 L57.53 1247.46 L58.20 1247.53 L58.86 1247.63 L59.41 1248.21 L59.66 1249.81 L59.76 1251.39 L60.10 1251.99 L60.56 1252.17 L61.02 1252.37 L61.46 1252.59 L61.90 1252.83 L62.32 1253.09 L62.74 1253.36 L63.14 1253.66 L63.53 1253.97 L64.21 1253.96 L65.64 1253.26 L67.14 1252.67 L67.92 1252.87 L68.34 1253.39 L68.73 1253.92 L69.10 1254.48 L69.45 1255.05 L69.77 1255.64 L70.07 1256.23 L70.34 1256.84 L70.58 1257.47 L70.36 1258.24 L69.09 1259.24 L67.77 1260.13 L67.43 1260.72 L67.50 1261.21 L67.56 1261.71 L67.59 1262.20 L67.60 1262.70 L67.59 1263.20 L67.56 1263.69 L67.50 1264.19 L67.43 1264.68 L67.77 1265.27 L69.09 1266.16 L70.36 1267.16 L70.58 1267.93 L70.34 1268.56 L70.07 1269.17 L69.77 1269.76 L69.45 1270.35 L69.10 1270.92 L68.73 1271.48 L68.34 1272.01 L67.92 1272.53 L67.14 1272.73 L65.64 1272.14 L64.21 1271.44 L63.53 1271.43 L63.14 1271.74 L62.74 1272.04 L62.32 1272.31 L61.90 1272.57 L61.46 1272.81 L61.02 1273.03 L60.56 1273.23 L60.10 1273.41 L59.76 1274.01 L59.66 1275.59 L59.41 1277.19 L58.86 1277.77 L58.20 1277.87 L57.53 1277.94 L56.87 1277.99 L56.20 1278.00 L55.53 1277.99 L54.87 1277.94 L54.20 1277.87 L53.54 1277.77 L52.99 1277.19 L52.74 1275.59 L52.64 1274.01 L52.30 1273.41 L51.84 1273.23 L51.38 1273.03 L50.94 1272.81 L50.50 1272.57 L50.08 1272.31 L49.66 1272.04 L49.26 1271.74 L48.87 1271.43 L48.19 1271.44 L46.76 1272.14 L45.26 1272.73 L44.48 1272.53 L44.06 1272.01 L43.67 1271.48 L43.30 1270.92 L42.95 1270.35 L42.63 1269.76 L42.33 1269.17 L42.06 1268.56 L41.82 1267.93 L42.04 1267.16 L43.31 1266.16 L44.63 1265.27 L44.97 1264.68 L44.90 1264.19 L44.84 1263.69 L44.81 1263.20 L44.80 1262.70 L44.81 1262.20 L44.84 1261.71 L44.90 1261.21 L44.97 1260.72 L44.63 1260.13 L43.31 1259.24 L42.04 1258.24 L41.82 1257.47 L42.06 1256.84 L42.33 1256.23 L42.63 1255.64 L42.95 1255.05 L43.30 1254.48 L43.67 1253.92 L44.06 1253.39 L44.48 1252.87 L45.26 1252.67 L46.76 1253.26 L48.19 1253.96 L48.87 1253.97 L49.26 1253.66 L49.66 1253.36 L50.08 1253.09 L50.50 1252.83 L50.94 1252.59 L51.38 1252.37 L51.84 1252.17 L52.30 1251.99 L52.64 1251.39 L52.74 1249.81 L52.99 1248.21 L53.54 1247.63 L54.20 1247.53 L54.87 1247.46 L55.53 1247.41Z"/><circle cx="56.2" cy="1262.7" r="5.5"/></g>
<path d="M46 1410L64 1419.5L46 1429Z" fill="#7f7f7f"/>
<path d="M1137.5 22.0 L1141.6 31.3 L1151.8 32.4 L1144.2 39.2 L1146.3 49.1 L1137.5 44.0 L1128.7 49.1 L1130.8 39.2 L1123.2 32.4 L1133.4 31.3Z" fill="none" stroke="#8a8a8a" stroke-width="3.6" stroke-linejoin="round"/>
<circle cx="1192.5" cy="37.5" r="3.6" fill="#7f7f7f"/>
<circle cx="1203.5" cy="37.5" r="3.6" fill="#7f7f7f"/>
<circle cx="1214.5" cy="37.5" r="3.6" fill="#7f7f7f"/>
<g fill="none" stroke-width="3.2" stroke-linecap="round" stroke-linejoin="round" stroke="#232323"><path d="M2015 27.5L2008.5 34L2015 40.5"/><path d="M2008.5 34H2020.5A8.2 8.2 0 0 1 2020.5 50.4H2018.5"/></g>
<g fill="none" stroke-width="3.2" stroke-linecap="round" stroke-linejoin="round" stroke="#b3b3b3"><path d="M2079.5 27.5L2086 34L2079.5 40.5"/><path d="M2086 34H2074.5A8.2 8.2 0 0 0 2074.5 50.4H2076.5"/></g>
<g fill="none" stroke-width="3.2" stroke="#232323" stroke-linecap="round" stroke-linejoin="round"><path d="M2144 29.5H2154.5V40M2133.5 40V50H2144"/></g>
<path d="M2483 35L2493 45L2503 35" fill="none" stroke-width="3.2" stroke-linecap="round" stroke-linejoin="round" stroke="#fff"/>
<path d="M161 115L172 126L183 115" fill="none" stroke-width="4" stroke-linecap="round" stroke-linejoin="round" stroke="#232323"/>
<path d="M607 175L615 184H599Z" fill="#dedede"/><path d="M599 1419H615L607 1427Z" fill="#dedede"/>
<path d="M1121 176L1129 184H1113Z" fill="#e2e2e2"/><path d="M1113 1407H1129L1121 1415Z" fill="#e2e2e2"/>
<rect x="673" y="118" width="8" height="16" rx="2" fill="#2b7be6"/><rect x="686" y="112" width="8" height="22" rx="2" fill="#2b7be6"/><rect x="698" y="106" width="8" height="28" rx="2" fill="#f5484f"/>
<g fill="none" stroke="#4b4b4b" stroke-width="3.3" stroke-linejoin="round"><path d="M1074.00 105.00 L1074.66 105.01 L1075.32 105.06 L1075.98 105.13 L1076.64 105.23 L1077.19 105.80 L1077.43 107.39 L1077.54 108.97 L1077.87 109.56 L1078.33 109.74 L1078.79 109.94 L1079.23 110.16 L1079.66 110.39 L1080.08 110.65 L1080.50 110.92 L1080.89 111.22 L1081.28 111.53 L1081.96 111.52 L1083.38 110.82 L1084.87 110.24 L1085.64 110.43 L1086.06 110.95 L1086.45 111.48 L1086.82 112.03 L1087.16 112.60 L1087.48 113.18 L1087.78 113.78 L1088.04 114.38 L1088.28 115.00 L1088.06 115.77 L1086.81 116.77 L1085.50 117.65 L1085.15 118.23 L1085.23 118.72 L1085.28 119.21 L1085.31 119.71 L1085.32 120.20 L1085.31 120.69 L1085.28 121.19 L1085.23 121.68 L1085.15 122.17 L1085.50 122.75 L1086.81 123.63 L1088.06 124.63 L1088.28 125.40 L1088.04 126.02 L1087.78 126.62 L1087.48 127.22 L1087.16 127.80 L1086.82 128.37 L1086.45 128.92 L1086.06 129.45 L1085.64 129.97 L1084.87 130.16 L1083.38 129.58 L1081.96 128.88 L1081.28 128.87 L1080.89 129.18 L1080.50 129.48 L1080.08 129.75 L1079.66 130.01 L1079.23 130.24 L1078.79 130.46 L1078.33 130.66 L1077.87 130.84 L1077.54 131.43 L1077.43 133.01 L1077.19 134.60 L1076.64 135.17 L1075.98 135.27 L1075.32 135.34 L1074.66 135.39 L1074.00 135.40 L1073.34 135.39 L1072.68 135.34 L1072.02 135.27 L1071.36 135.17 L1070.81 134.60 L1070.57 133.01 L1070.46 131.43 L1070.13 130.84 L1069.67 130.66 L1069.21 130.46 L1068.77 130.24 L1068.34 130.01 L1067.92 129.75 L1067.50 129.48 L1067.11 129.18 L1066.72 128.87 L1066.04 128.88 L1064.62 129.58 L1063.13 130.16 L1062.36 129.97 L1061.94 129.45 L1061.55 128.92 L1061.18 128.37 L1060.84 127.80 L1060.52 127.22 L1060.22 126.62 L1059.96 126.02 L1059.72 125.40 L1059.94 124.63 L1061.19 123.63 L1062.50 122.75 L1062.85 122.17 L1062.77 121.68 L1062.72 121.19 L1062.69 120.69 L1062.68 120.20 L1062.69 119.71 L1062.72 119.21 L1062.77 118.72 L1062.85 118.23 L1062.50 117.65 L1061.19 116.77 L1059.94 115.77 L1059.72 115.00 L1059.96 114.38 L1060.22 113.78 L1060.52 113.18 L1060.84 112.60 L1061.18 112.03 L1061.55 111.48 L1061.94 110.95 L1062.36 110.43 L1063.13 110.24 L1064.62 110.82 L1066.04 111.52 L1066.72 111.53 L1067.11 111.22 L1067.50 110.92 L1067.92 110.65 L1068.34 110.39 L1068.77 110.16 L1069.21 109.94 L1069.67 109.74 L1070.13 109.56 L1070.46 108.97 L1070.57 107.39 L1070.81 105.80 L1071.36 105.23 L1072.02 105.13 L1072.68 105.06 L1073.34 105.01Z"/><circle cx="1074" cy="120.2" r="5.5"/></g>
<g fill="none" stroke-width="3.4" stroke-linecap="round" stroke-linejoin="round" stroke="#4b4b4b"><path d="M677 218H704M694 208L704 218L694 228"/></g>
<g fill="none" stroke-width="3.4" stroke-linecap="round" stroke-linejoin="round" stroke="#4b4b4b"><path d="M690.5 437V410M680.5 420L690.5 410L700.5 420"/></g>
<g><path d="M676 629H694L700 627.5L689 637.5Q684 640.5 680 638.5L677 636Q673 633 676 629Z" fill="#4b4b4b"/><path d="M687 612L675.5 629Q672.5 634 677 637.5L680.5 639Q684 640.5 688 638L700.5 628" fill="none" stroke="#4b4b4b" stroke-width="3.8" stroke-linejoin="round" stroke-linecap="round"/><ellipse cx="693.3" cy="620.3" rx="10.2" ry="5" transform="rotate(43 693.3 620.3)" fill="none" stroke="#4b4b4b" stroke-width="3.4"/><path d="M701 632.5C698 636 697 638.5 697 640A4 4 0 0 0 705 640C705 638.5 704 636 701 632.5Z" fill="#4b4b4b"/></g>
<g fill="none" stroke-width="3.4" stroke-linecap="round" stroke-linejoin="round" stroke="#4b4b4b"><path d="M676 822H705M676 833H696M676 844H682"/></g>
<g fill="none" stroke-width="3.4" stroke-linecap="round" stroke-linejoin="round" stroke="#4b4b4b" stroke-linecap="butt" stroke-linejoin="miter"><path d="M681 1034L690.5 1010L700 1034M684.5 1025H696.5"/></g>
<g fill="none" stroke-width="3.4" stroke-linecap="round" stroke-linejoin="round" stroke="#4b4b4b"><rect x="677" y="1215" width="27" height="23" rx="5"/><path d="M677 1226.5H704"/></g>
<g fill="none" stroke-width="3.4" stroke-linecap="round" stroke-linejoin="round" stroke="#4b4b4b"><ellipse cx="690.5" cy="1407" rx="11.5" ry="5"/><path d="M679.5 1409L686 1419V1429M701.5 1409L695 1419V1429"/></g>
<g fill="none" stroke-width="3.2" stroke-linecap="round" stroke-linejoin="round" stroke="#232323"><path d="M1229 161.5V143M1222 150L1229 143L1236 150"/><path d="M1284.5 142V160.5M1277.5 153.5L1284.5 160.5L1291.5 153.5"/></g>
</svg>
<div class="a" style="left:0;top:0;width:2560px;height:3px;background:#cbcbcb;z-index:99"></div>
<div class="a" style="left:0;top:1437px;width:2560px;height:3px;background:#cbcbcb;z-index:99"></div>
<div class="a" style="left:0;top:0;width:3px;height:1440px;background:#cbcbcb;z-index:99"></div>
<div class="a" style="left:2557px;top:0;width:3px;height:1440px;background:#cbcbcb;z-index:99"></div>
</body></html>
